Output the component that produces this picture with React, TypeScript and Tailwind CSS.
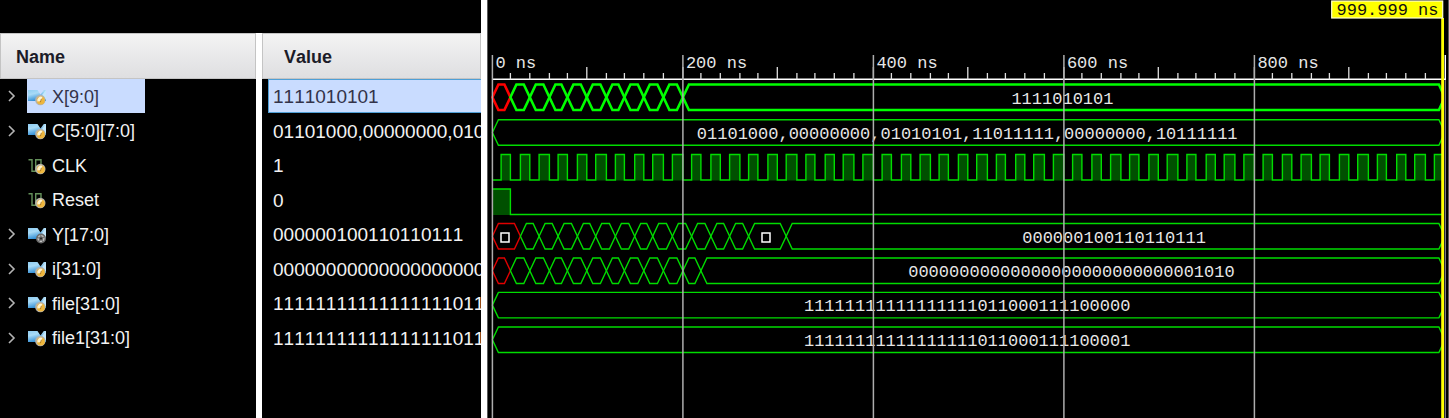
import React from "react";

type Kind = "bus" | "busOut" | "wire";

type Signal = {
  name: string;
  value: string;
  kind: Kind;
  selected?: boolean;
};

const signals: Signal[] = [
  { name: "X[9:0]", value: "1111010101", kind: "bus", selected: true },
  { name: "C[5:0][7:0]", value: "01101000,00000000,01010101,11011111,00000000,10111111", kind: "bus" },
  { name: "CLK", value: "1", kind: "wire" },
  { name: "Reset", value: "0", kind: "wire" },
  { name: "Y[17:0]", value: "000000100110110111", kind: "busOut" },
  { name: "i[31:0]", value: "00000000000000000000000000001010", kind: "bus" },
  { name: "file[31:0]", value: "11111111111111111011000111100000", kind: "bus" },
  { name: "file1[31:0]", value: "11111111111111111011000111100001", kind: "bus" },
];

function Badge({ gray }: { gray?: boolean }) {
  return gray ? (
    <g>
      <circle cx="13" cy="11.5" r="5" fill="#6b6b6b" />
      <circle cx="13" cy="11.5" r="2.9" fill="none" stroke="#c4c4c4" strokeWidth="1.3" strokeDasharray="2.4 1" />
      <circle cx="13" cy="11.5" r="1" fill="#222" />
    </g>
  ) : (
    <g>
      <circle cx="12.3" cy="11" r="5.2" fill="#b5b2aa" />
      <circle cx="12.8" cy="11.6" r="4" fill="#eeb63c" />
      <path d="M9.4 12.5a3.8 3.8 0 0 1 5-4.6l-1.4 4z" fill="#fff3cf" />
      <path d="M13.4 9.8l-1 3.4" stroke="#a8741a" strokeWidth="0.9" />
    </g>
  );
}

function SignalIcon({ kind }: { kind: Kind }) {
  if (kind === "wire") {
    return (
      <svg width="18" height="17" viewBox="0 0 18 17" aria-hidden="true" className="shrink-0">
        <path d="M0.5 1.7H4v11.5h3.7V1.7H13V8" fill="none" stroke="#64905a" strokeWidth="1.4" />
        <Badge />
      </svg>
    );
  }
  return (
    <svg width="18" height="17" viewBox="0 0 18 17" aria-hidden="true" className="shrink-0">
      <defs>
        <linearGradient id="busFill" x1="0" y1="0" x2="0.4" y2="1">
          <stop offset="0" stopColor="#8fcdf2" />
          <stop offset="0.4" stopColor="#a8daf6" />
          <stop offset="1" stopColor="#2a8ad4" />
        </linearGradient>
      </defs>
      <path d="M0 1h9.5l3 4.5L15.8 1H18v11H0z" fill="url(#busFill)" />
      <path d="M18 1v10l-4-5z" fill="#c4e7fb" />
      <Badge gray={kind === "busOut"} />
    </svg>
  );
}

/* Horizontal offsets of each 10 ns step inside a 200 ns division. */
const steps = [0, 8.7, 18, 28, 37.4, 46.7, 57, 65.7, 75, 85, 94.4, 103.3, 114, 123, 132, 142.3, 151.4, 160.3, 171, 180];
const ORIGIN = 5.4;
const DIVISION = 190.5;
const END = 957.9;

function xAt(ns: number) {
  return ORIGIN + Math.floor(ns / 200) * DIVISION + steps[(ns % 200) / 10];
}

function range(from: number, to: number, step: number) {
  const out: number[] = [];
  for (let n = from; n <= to; n += step) out.push(n);
  return out;
}

const SLANT = 6;
const HEIGHT = 25.5;

function hexPath(x0: number, x1: number, top: number) {
  const mid = top + HEIGHT / 2;
  const bottom = top + HEIGHT;
  return `M${x0} ${mid}L${x0 + SLANT} ${top}H${x1 - SLANT}L${x1} ${mid}L${x1 - SLANT} ${bottom}H${x0 + SLANT}Z`;
}

type BusProps = {
  top: number;
  edges: number[];
  label: string;
  unknownFirst?: boolean;
  bold?: boolean;
};

function BusWave({ top, edges, label, unknownFirst, bold }: BusProps) {
  const xs = [0, ...edges].map(xAt).concat(END);
  const last = xs[xs.length - 2];
  const segments = xs.slice(0, -1).map((x, i) => ({ x0: x, x1: xs[i + 1], red: Boolean(unknownFirst) && i === 0 }));
  return (
    <g>
      {segments.map((s) => (
        <path
          key={s.x0}
          d={hexPath(s.x0, s.x1, top)}
          fill="none"
          stroke={s.red ? (bold ? "#ff0000" : "#e00000") : bold ? "#00ff00" : "#00dc00"}
          strokeWidth={bold ? 2.6 : 1.4}
        />
      ))}
      <text x={(last + 955) / 2} y={top + 19} textAnchor="middle" fill="#e6e6e6">
        {label}
      </text>
    </g>
  );
}

function Waveform() {
  const pulses = range(10, 990, 20);
  const clock =
    `M${ORIGIN} 180` +
    pulses.map((t) => `H${xAt(t)}V154.5H${t === 990 ? END : xAt(t + 10)}${t === 990 ? "" : "V180"}`).join("");
  return (
    <svg
      viewBox="0 0 962 418"
      className="block h-auto w-full font-['Liberation_Mono',monospace] text-[17px]"
      role="img"
      aria-label="Waveform from 0 ns to 1000 ns"
    >
      <defs>
        <clipPath id="waveClip">
          <rect x="0" y="0" width="955" height="418" />
        </clipPath>
      </defs>
      <path d="M0.5 0V418M961.5 0V418" stroke="#5a5a5a" strokeWidth="1" />
      <g clipPath="url(#waveClip)">
        <BusWave top={84.5} edges={range(20, 200, 20)} label="1111010101" unknownFirst bold />
        <BusWave top={119.7} edges={[]} label="01101000,00000000,01010101,11011111,00000000,10111111" />
        {pulses.map((t) => (
          <rect
            key={t}
            x={xAt(t)}
            y="154.5"
            width={(t === 990 ? END : xAt(t + 10)) - xAt(t)}
            height="26"
            fill="#005000"
          />
        ))}
        <path d={clock} fill="none" stroke="#00dc00" strokeWidth="1.4" />
        <rect x={ORIGIN} y="189" width="18" height="26" fill="#005000" />
        <path d={`M${ORIGIN} 189H${xAt(20)}V214.5H955`} fill="none" stroke="#00dc00" strokeWidth="1.4" />
        <BusWave top={223.5} edges={[...range(30, 270, 20), 310]} label="000000100110110111" unknownFirst />
        <path d="M14 233h8v9h-8zM275 233h8v9h-8z" fill="none" stroke="#fff" strokeWidth="1.5" />
        <BusWave top={258} edges={range(20, 220, 20)} label="00000000000000000000000000001010" unknownFirst />
        <BusWave top={292.4} edges={[]} label="11111111111111111011000111100000" />
        <BusWave top={327} edges={[]} label="11111111111111111011000111100001" />
      </g>
      <path d={`M${ORIGIN} 79.3H958.5`} stroke="#fff" strokeWidth="1.5" />
      {range(20, 980, 20).map((t) => (
        <path key={t} d={`M${xAt(t)} ${t % 100 === 0 ? 67 : 73}V79.5`} stroke="#e0e0e0" strokeWidth="1.3" />
      ))}
      {[0, 200, 400, 600, 800].map((t) => (
        <g key={t}>
          <path d={`M${xAt(t)} 55V418`} stroke="#adadad" strokeWidth="1.5" />
          <text x={xAt(t) + 3} y="68" fill="#e6e6e6">
            {`${t} ns`}
          </text>
        </g>
      ))}
      <path d="M958.3 55V80" stroke="#fff" strokeWidth="1.4" />
      <path d="M958.3 80V418" stroke="#8a8a8a" strokeWidth="1.2" />
      <path d="M955.6 18V418" stroke="#ffff00" strokeWidth="2.8" />
      <rect x="844.7" y="1" width="111" height="17" fill="#ffff00" stroke="#ffffd8" strokeWidth="1.2" />
      <text x="900.5" y="15" textAnchor="middle" fill="#111">
        999.999 ns
      </text>
    </svg>
  );
}

function SignalTable() {
  return (
    <table className="h-full w-full table-fixed border-separate border-spacing-0 text-left whitespace-nowrap text-[#f2f2f2] [font-kerning:none]">
      <colgroup>
        <col className="w-[262px]" />
        <col />
      </colgroup>
      <thead>
        <tr className="h-[46px] text-[18px] text-[#1c1c28]">
          <th className="border-r-[6px] border-white bg-linear-to-b from-[#f4f4f4] to-[#dedee0] p-0 pt-0.5 pl-4 font-bold shadow-[inset_0_0_0_1px_#c4c4c4]">
            Name
          </th>
          <th className="bg-linear-to-b from-[#f4f4f4] to-[#dedee0] p-0 pt-0.5 pl-[22px] font-bold shadow-[inset_0_0_0_1px_#c4c4c4]">
            Value
          </th>
        </tr>
      </thead>
      <tbody>
        {signals.map((s) => (
          <tr key={s.name} className="odd:h-[34px] even:h-[35px]">
            <td className="border-r-[6px] border-white p-0">
              <div className="flex h-[34px] items-center">
                <span className="flex w-[27px] shrink-0 pl-2">
                  {s.kind !== "wire" && (
                    <button type="button" aria-label={`Expand ${s.name}`} className="block">
                      <svg width="8" height="12" viewBox="0 0 8 12" aria-hidden="true">
                        <path d="M1 1l5 5-5 5" fill="none" stroke="#b4b4b4" strokeWidth="1.6" />
                      </svg>
                    </button>
                  )}
                </span>
                <span
                  className={
                    s.selected
                      ? "flex h-full w-[118px] items-center gap-[6px] bg-[#c9dcff] pt-0.5 pl-px text-[18px] text-[#33334a]"
                      : "flex h-full items-center gap-[6px] pt-0.5 pl-px text-[18px]"
                  }
                >
                  <SignalIcon kind={s.kind} />
                  {s.name}
                </span>
              </div>
            </td>
            <td className="p-0 pl-[6px]">
              <div
                className={
                  s.selected
                    ? "h-[34px] overflow-hidden border border-r-0 border-[#4f9fd6] bg-[#c9dcff] pl-1 text-[19px] leading-[34px] text-[#33334a]"
                    : "h-[34px] overflow-hidden pl-[5px] text-[19px] leading-[36px]"
                }
              >
                {s.value}
              </div>
            </td>
          </tr>
        ))}
        <tr className="h-full" aria-hidden="true">
          <td className="border-r-[6px] border-white p-0" />
          <td className="p-0" />
        </tr>
      </tbody>
    </table>
  );
}

export default function App() {
  return (
    <main className="flex min-h-screen bg-black font-['Liberation_Sans',Arial,sans-serif]">
      <section aria-label="Signals" className="grid w-[487px] shrink-0 border-r-[6px] border-white pt-[33px]">
        <SignalTable />
      </section>
      <section aria-label="Waveform" className="min-w-0 flex-1">
        <Waveform />
      </section>
    </main>
  );
}
